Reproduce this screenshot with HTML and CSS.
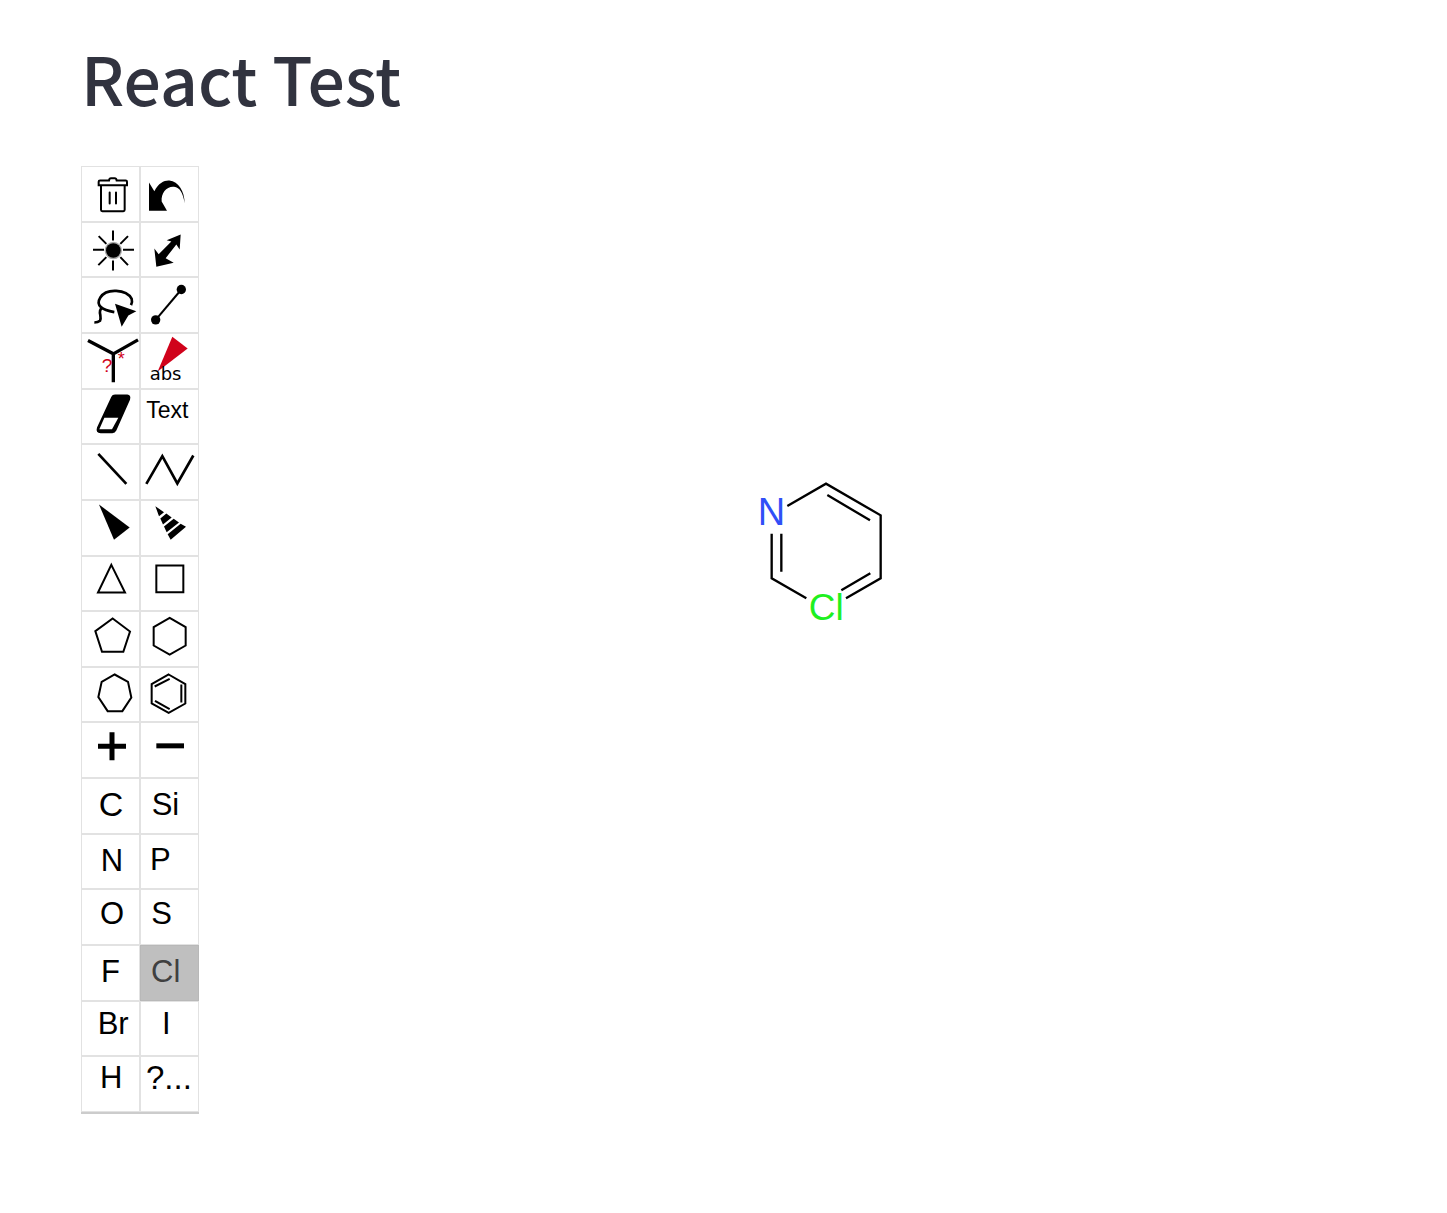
FILE: index.html
```html
<!DOCTYPE html>
<html lang="en">
<head>
<meta charset="utf-8">
<title>React Test</title>
<link rel="stylesheet" href="styles.css">
</head>
<body>
<main class="page">
<h1 class="title">React Test</h1>
<div class="editor">
<div class="toolbar" role="toolbar" aria-label="Structure tools">
<button class="tool" aria-label="Clear"><svg viewBox="15 21 177 167"><g class="line round"><path d="M75 75V149Q75 153 79 153H142Q146 153 146 149V75M72 61H99Q100 54 105 54H116Q121 54 122 61H149Q153 61 153 65V75H68V65Q68 61 72 61"/><path d="M101 97V130M120 97V130"/></g></svg></button>
<button class="tool" aria-label="Undo"><svg viewBox="192 21 177 167"><path d="M219 67L235 93C248 68 265 60 280 61C308 65 325 92 326 129C321 99 312 82 294 80C272 78 255 98 257 124L273 152H219Z"/></svg></button>
<button class="tool" aria-label="Clean up"><svg viewBox="15 188 177 167"><circle cx="112" cy="270" r="26" fill="#aaa"/><circle cx="112" cy="270" r="22"/><path class="line" d="M111 210V240M111 300V330M51 268H84M141 268H174M68 227L91 250M156 227L133 250M67 314L91 290M133 290L156 314"/></svg></button>
<button class="tool" aria-label="Resize"><svg viewBox="192 188 177 167"><path d="M314 222L311 267L301 252L269 293L293 307L241 319L235 264L248 281L286 243L272 239Z"/></svg></button>
<button class="tool" aria-label="Lasso"><svg viewBox="15 10 177 167"><path class="line bold" d="M115 112C78 106 58 92 73 68C91 39 151 43 167 72Q170 81 165 91M78 99Q69 105 73 121Q75 133 72 138Q66 143 55 143"/><path d="M117 87L181 109L157 122L137 156Z"/></svg></button>
<button class="tool" aria-label="Bond length"><svg viewBox="192 9 177 167"><path class="line" d="M239 134L316 43"/><circle cx="239" cy="134" r="14"/><circle cx="316" cy="43" r="14"/></svg></button>
<button class="tool" aria-label="Query atom"><svg viewBox="15 177 177 167"><path class="line heavy" d="M36 196L112 236L186 194M112 235V321"/><text class="red" x="77" y="290" font-size="57">?</text><text class="red" x="125" y="270" font-size="54">*</text></svg></button>
<button class="tool" aria-label="Absolute stereo"><svg viewBox="192 176 177 167"><path class="red" d="M289 184L335 219L245 288Z"/><text class="wide" x="221" y="313" font-size="54">abs</text></svg></button>
<button class="tool" aria-label="Erase"><svg viewBox="15 14 177 167"><path d="M117 27H154Q166 28 162 43L121 135Q117 143 109 143H74Q58 143 63 126L106 34Q109 27 117 27Z"/><path fill="#fff" d="M85 97H127L108 131H70Z"/></svg></button>
<button class="tool"><svg viewBox="192 14 177 167"><text x="211" y="97" font-size="69">Text</text></svg></button>
<button class="tool" aria-label="Single bond"><svg viewBox="15 179 177 167"><path class="line bold" d="M67 205L151 295"/></svg></button>
<button class="tool" aria-label="Chain"><svg viewBox="192 180 177 167"><path class="line bold" d="M211 296L259 213L304 295L352 211"/></svg></button>
<button class="tool" aria-label="Wedge bond"><svg viewBox="15 18 177 167"><path d="M69 28L161 97L114 134Z"/></svg></button>
<button class="tool" aria-label="Hash bond"><svg viewBox="192 18 177 167"><path d="M238 33L264 51L249 63ZM271 55L287 67L261 88L253 70ZM293 71L309 82L272 111L264 94ZM314 86L330 95L284 134L275 117Z"/></svg></button>
<button class="tool" aria-label="Three-membered ring"><svg viewBox="15 185 177 167"><path class="line" d="M106 208L147 291H66Z"/></svg></button>
<button class="tool" aria-label="Four-membered ring"><svg viewBox="192 185 177 167"><path class="line" d="M241 210H322V290H241Z"/></svg></button>
<button class="tool" aria-label="Five-membered ring"><svg viewBox="15 21 177 167"><path class="line" d="M110 40L162 79L142 140H78L58 78Z"/></svg></button>
<button class="tool" aria-label="Six-membered ring"><svg viewBox="192 21 177 167"><path class="line" d="M281 38L329 66V121L281 148L233 121V66Z"/></svg></button>
<button class="tool" aria-label="Seven-membered ring"><svg viewBox="15 188 177 167"><path class="line" d="M116 207L156 229L166 276L139 317H95L67 275L77 229Z"/></svg></button>
<button class="tool" aria-label="Benzene ring"><svg viewBox="192 188 177 167"><path class="line" d="M278 207L328 236V294L278 322L227 294V236ZM236 243L281 220M316 237V291M237 286L281 311"/></svg></button>
<button class="tool" aria-label="Positive charge"><svg viewBox="15 24 177 167"><path class="line thick" d="M66 93H150M108 51V135"/></svg></button>
<button class="tool" aria-label="Negative charge"><svg viewBox="192 24 177 167"><path class="line thick" d="M241 92H324"/></svg></button>
<button class="tool"><svg viewBox="15 193 177 167"><text x="68" y="304" font-size="102">C</text></svg></button>
<button class="tool"><svg viewBox="192 193 177 167"><text x="227" y="300" font-size="93">Si</text></svg></button>
<button class="tool"><svg viewBox="15 15 177 167"><text x="74" y="124" font-size="93">N</text></svg></button>
<button class="tool"><svg viewBox="192 15 177 167"><text x="222" y="119" font-size="93">P</text></svg></button>
<button class="tool"><svg viewBox="15 181 177 167"><text x="72" y="282" font-size="93">O</text></svg></button>
<button class="tool"><svg viewBox="192 181 177 167"><text x="226" y="282" font-size="93">S</text></svg></button>
<button class="tool"><svg viewBox="15 18 177 167"><text x="75" y="125" font-size="93">F</text></svg></button>
<button class="tool selected" aria-pressed="true"><svg viewBox="192 18 177 167"><text x="225" y="125" font-size="93">Cl</text></svg></button>
<button class="tool"><svg viewBox="15 185 177 167"><text x="65" y="281" font-size="93">Br</text></svg></button>
<button class="tool"><svg viewBox="192 185 177 167"><text x="258" y="281" font-size="93">I</text></svg></button>
<button class="tool"><svg viewBox="15 352 177 167"><text x="72" y="445" font-size="93">H</text></svg></button>
<button class="tool"><svg viewBox="192 352 177 167"><text x="210" y="447" font-size="99">?...</text></svg></button>
</div>
<div class="canvas">
<svg class="molecule" viewBox="0 0 480 480" role="img" aria-label="Molecule">
<path class="line" d="M142 108L258 41L422 136V325L318 385M262 75L390 151M391 310L304 361M95 191V325L199 385M124 191V305"/>
<text class="nitrogen" x="53" y="165" font-size="114">N</text>
<text class="chlorine" x="206" y="449" font-size="111">Cl</text>
</svg>
</div>
</div>
</main>
</body>
</html>
```
FILE: styles.css
```css
body {
  margin: 0;
  background: #fff;
  font-family: "Liberation Sans", Arial, sans-serif;
}

.page {
  padding: 32px 0 100px 81px;
}

.title {
  margin: 0 0 44px;
  color: #31333f;
  font-family: "Noto Sans CJK JP", "Noto Sans", sans-serif;
  font-size: 66px;
  font-weight: 500;
  line-height: 90px;
}

.editor {
  display: flex;
}

.toolbar {
  box-sizing: border-box;
  display: grid;
  flex: none;
  grid-template-columns: repeat(2, 59px);
  grid-template-rows: repeat(17, 1fr);
  height: 948px;
  border-bottom: 2px solid #ccc;
}

.tool {
  display: flex;
  box-sizing: border-box;
  min-width: 0;
  min-height: 0;
  padding: 0;
  border: 1px solid #e2e2e2;
  background: #fff;
}

.tool svg {
  flex: none;
  width: 59px;
  height: 56px;
  margin: 0 -1px -1px;
}

.selected {
  border-color: #b8b8b8;
  background: #bfbfbf;
  fill: #404040;
}

.line {
  fill: none;
  stroke: #000;
  stroke-width: 6;
}

.round {
  stroke-linecap: round;
}

.bold {
  stroke-width: 8;
}

.heavy {
  stroke-width: 10;
}

.thick {
  stroke-width: 15;
}

.red {
  fill: #d0021b;
}

.wide {
  font-family: "DejaVu Sans", sans-serif;
}

.canvas {
  display: flex;
  flex: 1;
  align-items: flex-start;
  justify-content: center;
  padding: 304px 6px 0 0;
}

.molecule {
  flex: none;
  width: 160px;
  height: 160px;
}

.molecule .line {
  stroke-width: 7;
}

.nitrogen {
  fill: #304ff7;
}

.chlorine {
  fill: #1ff01f;
}
```
